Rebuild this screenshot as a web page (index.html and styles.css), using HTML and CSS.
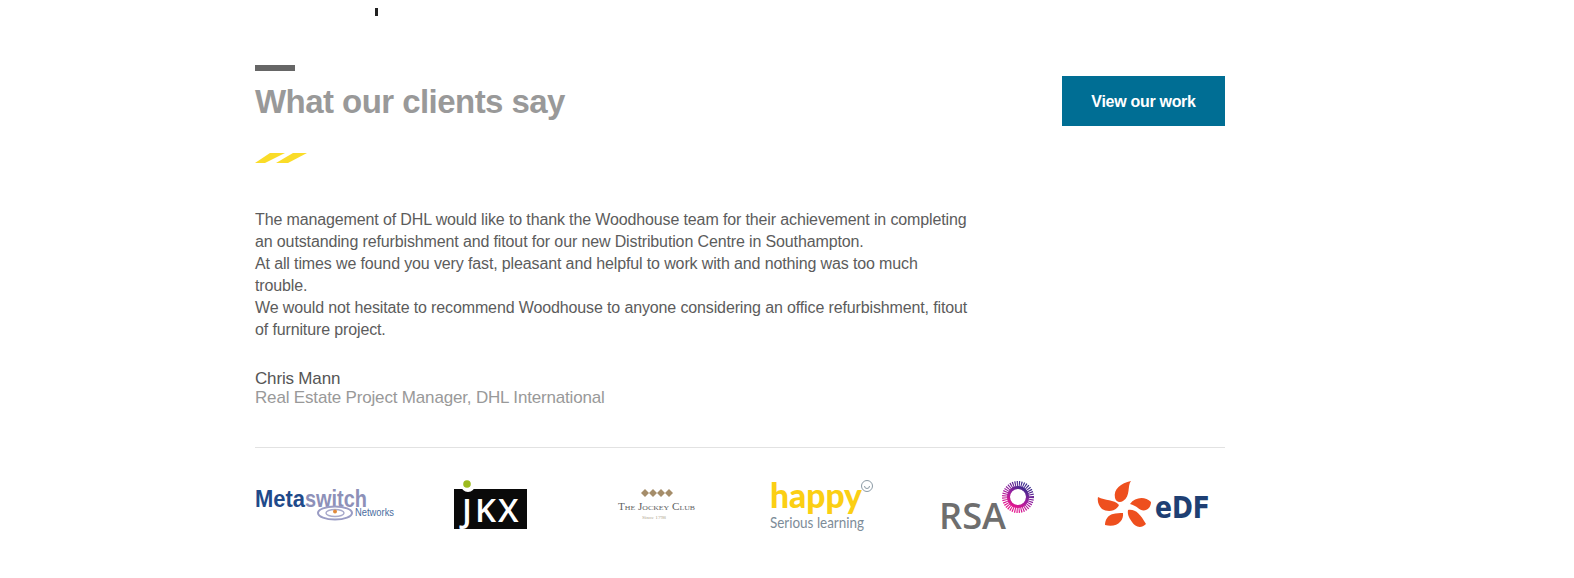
FILE: index.html
```html
<!DOCTYPE html>
<html lang="en">
<head>
  <meta charset="UTF-8" />
  <meta name="viewport" content="width=device-width, initial-scale=1.0" />
  <title>What our clients say</title>
  <link rel="stylesheet" href="styles.css">
</head>
<body>
  <div class="tick"></div>

  <section class="clients">
    <div class="clients-head">
      <div>
        <div class="rule"></div>
        <h1>What our clients say</h1>
      </div>
      <a class="btn" href="#">View our work</a>
    </div>

    <svg class="slashes" viewBox="0 0 52 10" width="52" height="10">
      <polygon points="0,10 10,10 30,0 15,0" />
      <polygon points="21,10 33,10 52,0 38,0" />
    </svg>

    <div class="quote">
      <p>The management of DHL would like to thank the Woodhouse team for their achievement in completing an outstanding refurbishment and fitout for our new Distribution Centre in Southampton.</p>
      <p>At all times we found you very fast, pleasant and helpful to work with and nothing was too much trouble.</p>
      <p>We would not hesitate to recommend Woodhouse to anyone considering an office refurbishment, fitout of furniture project.</p>
    </div>

    <div class="name">Chris Mann</div>
    <div class="role">Real Estate Project Manager, DHL International</div>

    <div class="logos">
      <!-- metaswitch -->
      <svg viewBox="0 0 140 56" width="140" height="56">
        <text x="0" y="29" class="l-meta" textLength="50" lengthAdjust="spacingAndGlyphs">Meta</text>
        <text x="50" y="29" class="l-switch" textLength="62" lengthAdjust="spacingAndGlyphs">switch</text>
        <ellipse cx="80" cy="35" rx="17" ry="6.5" fill="none" stroke="#9a9cc4" stroke-width="2" />
        <ellipse cx="80" cy="35" rx="9" ry="3.5" fill="none" stroke="#a9abcc" stroke-width="1.5" />
        <circle cx="80" cy="33.5" r="2" fill="#e08a3c" />
        <text x="100" y="38" class="l-net" textLength="39" lengthAdjust="spacingAndGlyphs">Networks</text>
      </svg>
      <!-- jkx -->
      <svg viewBox="0 0 140 56" width="140" height="56">
        <rect x="33" y="11" width="73" height="40" fill="#0a0a0a" />
        <text x="41 54 77" y="44" class="l-jkx">JKX</text>
        <circle cx="47" cy="7" r="7" fill="#fff" />
        <circle cx="46" cy="6" r="3.8" fill="#9dbb1f" />
      </svg>
      <!-- jockey club -->
      <svg viewBox="0 0 140 56" width="140" height="56">
        <g fill="#a58d6a">
          <polygon points="54,15 58,11 62,15 58,19" />
          <polygon points="62,15 66,11 70,15 66,19" />
          <polygon points="70,15 74,11 78,15 74,19" />
          <polygon points="78,15 82,11 86,15 82,19" />
        </g>
        <text x="31" y="32" class="l-jockey" textLength="77" lengthAdjust="spacingAndGlyphs">The Jockey Club</text>
        <text x="55" y="41" class="l-since" textLength="24" lengthAdjust="spacingAndGlyphs">Since 1798</text>
      </svg>
      <!-- happy -->
      <svg viewBox="0 0 140 56" width="140" height="56">
        <text x="17" y="30" class="l-happy" textLength="92" lengthAdjust="spacingAndGlyphs">happy</text>
        <circle cx="114" cy="8" r="5.5" fill="none" stroke="#8b9aa5" stroke-width="1" />
        <path d="M111.5 8a2.5 2.5 0 0 0 5 0" fill="none" stroke="#8b9aa5" stroke-width="1" />
        <text x="17" y="50" class="l-serious" textLength="94" lengthAdjust="spacingAndGlyphs">Serious learning</text>
      </svg>
      <!-- rsa -->
      <svg viewBox="0 0 140 56" width="140" height="56">
        <defs>
          <linearGradient id="rsaGrad" x1="0.8" y1="0" x2="0.2" y2="1">
            <stop offset="0" stop-color="#3b2a8c" />
            <stop offset="0.5" stop-color="#a01fa0" />
            <stop offset="1" stop-color="#e6148c" />
          </linearGradient>
        </defs>
        <text x="20" y="51" class="l-rsa" textLength="67" lengthAdjust="spacingAndGlyphs">RSA</text>
        <circle cx="99" cy="19" r="12" fill="none" stroke="url(#rsaGrad)" stroke-width="8" stroke-dasharray="1 0.9" />
        <circle cx="99" cy="19" r="9.5" fill="none" stroke="url(#rsaGrad)" stroke-width="3" />
      </svg>
      <!-- edf -->
      <svg viewBox="0 0 140 56" width="140" height="56">
        <g fill="#ee4f1e">
          <path d="M30 20C28 11 36 5 46 3C42 8 46 18 38 23C35 25 31 24 30 20Z" />
          <path d="M45 26C50 19 60 18 66 24C66 32 58 35 53 30C51 28 48 27 45 26Z" />
          <path d="M43 32C51 31 55 36 61 46C56 51 50 49 47 44C45 41 42 37 43 32Z" />
          <path d="M38 35C39 43 32 50 20 47C20 42 23 37 28 36C31 35 35 35 38 35Z" />
          <path d="M13 19C20 23 29 21 34 27C31 34 22 34 17 31C14 28 12 24 13 19Z" />
        </g>
        <text x="70" y="40" class="l-edf" textLength="55" lengthAdjust="spacingAndGlyphs">eDF</text>
      </svg>
    </div>
  </section>
</body>
</html>
```

FILE: styles.css
```css
body {
  margin: 0;
  background: #fff;
  font-family: 'Liberation Sans', Arial, sans-serif;
  color: #5c5c5c;
}
.tick {
  width: 3px;
  height: 8px;
  background: #222;
  margin: 8px 0 0 375px;
}
.clients {
  width: 970px;
  margin-left: 255px;
  padding-top: 49px;
}
.clients-head {
  display: flex;
  justify-content: space-between;
  align-items: flex-start;
}
.rule {
  width: 40px;
  height: 6px;
  background: #666;
}
h1 {
  margin: 11px 0 0;
  font-size: 33px;
  line-height: 40px;
  font-weight: bold;
  letter-spacing: -0.55px;
  color: #999;
}
.btn {
  display: block;
  width: 163px;
  height: 50px;
  margin-top: 11px;
  background: #006e94;
  color: #fff;
  font-size: 16px;
  font-weight: bold;
  letter-spacing: -0.3px;
  line-height: 52px;
  text-align: center;
  text-decoration: none;
}
.slashes {
  display: block;
  margin-top: 27px;
  fill: #fadc28;
}
.quote {
  width: 715px;
  margin-top: 46px;
  font-size: 16px;
  line-height: 22px;
  letter-spacing: -0.13px;
}
.quote p {
  margin: 0;
}
.name {
  margin-top: 28px;
  font-size: 17px;
  line-height: 19px;
  letter-spacing: -0.17px;
  color: #555;
}
.role {
  margin-top: 1px;
  font-size: 17px;
  line-height: 18px;
  letter-spacing: -0.17px;
  color: #999;
}
.logos {
  display: flex;
  justify-content: space-between;
  border-top: 1px solid #e2e2e2;
  margin-top: 40px;
  padding-top: 30px;
}
.logos svg {
  display: block;
  overflow: visible;
}
.l-meta {
  font: bold 24px 'Liberation Sans', sans-serif;
  fill: #1f4a8a;
}
.l-switch {
  font: bold 24px 'Liberation Sans', sans-serif;
  fill: #8d90b8;
}
.l-net {
  font: 11px 'Liberation Sans', sans-serif;
  fill: #4a6da0;
}
.l-jkx {
  font: 600 33px 'Open Sans', sans-serif;
  fill: #fff;
}
.l-jockey {
  font: 10px 'Liberation Serif', serif;
  font-variant: small-caps;
  fill: #5f5f5f;
}
.l-since {
  font: 4px 'Liberation Serif', serif;
  fill: #b0a58f;
}
.l-happy {
  font: 900 35px Lato, sans-serif;
  fill: #fbcf14;
}
.l-serious {
  font: 16px Lato, sans-serif;
  fill: #7d8c98;
}
.l-rsa {
  font: 600 36px 'Open Sans', sans-serif;
  fill: #6e6e6e;
}
.l-edf {
  font: bold 31px 'DejaVu Sans', sans-serif;
  fill: #1e3f73;
}
```
